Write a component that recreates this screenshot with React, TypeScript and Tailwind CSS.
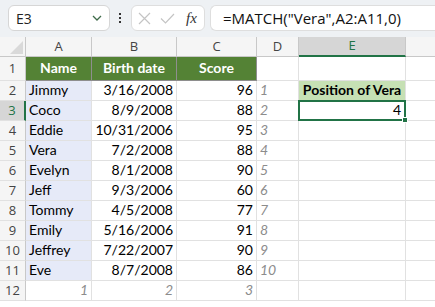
import React from 'react';

const COLS = ['A', 'B', 'C', 'D', 'E', ''];

const DATA: [string, string, number][] = [
  ['Jimmy', '3/16/2008', 96],
  ['Coco', '8/9/2008', 88],
  ['Eddie', '10/31/2006', 95],
  ['Vera', '7/2/2008', 88],
  ['Evelyn', '8/1/2008', 90],
  ['Jeff', '9/3/2006', 60],
  ['Tommy', '4/5/2008', 77],
  ['Emily', '5/16/2006', 91],
  ['Jeffrey', '7/22/2007', 90],
  ['Eve', '8/7/2008', 86],
];

const cellFont = { fontFamily: 'Lato, "Liberation Sans", sans-serif' };
const uiFont = { fontFamily: '"Open Sans", "Noto Sans", sans-serif' };

/** Plain gridline cell. */
function Cell({ className = '', children }: { className?: string; children?: React.ReactNode }) {
  return (
    <div className={`flex items-end overflow-visible whitespace-nowrap border-r border-b border-[#e1e1e1] px-[3px] pb-[1px] text-[14px] leading-[18px] text-black ${className}`}>
      {children}
    </div>
  );
}

function RowHead({ n, selected }: { n: number; selected?: boolean }) {
  return (
    <div
      className={`flex items-center justify-center border-b border-[#e1e1e1] text-[13px] ${
        selected ? 'border-r-2 border-r-[#217346] bg-[#d6d6d6] text-[#217346]' : 'border-r border-r-[#c8c8c8] bg-[#f5f5f5] text-[#444]'
      }`}
      style={uiFont}
    >
      {n}
    </div>
  );
}

function Tally({ children, right }: { children: React.ReactNode; right?: boolean }) {
  return <span className={`w-full italic text-[#8c8c8c] ${right ? 'text-right' : ''}`}>{children}</span>;
}

export default function App() {
  return (
    <div className="h-[307px] w-[435px] overflow-hidden bg-white" style={cellFont}>
      {/* formula bar */}
      <div className="flex h-[37px] items-start bg-[#eef1f4] pt-[5px]" style={uiFont}>
        <div className="ml-[8px] flex h-[26px] w-[102px] items-center justify-between rounded-[6px] border border-[#d6d6d6] bg-white pl-[7px] pr-[7px] text-[14px] text-[#222]">
          <span>E3</span>
          <svg width="10" height="6" viewBox="0 0 10 6" fill="none" stroke="#3f6b4a" strokeWidth="1.3">
            <path d="M1 1l4 4 4-4" />
          </svg>
        </div>
        <div className="flex h-[26px] w-[20px] flex-col items-center justify-center gap-[2px]">
          <span className="h-[2px] w-[2px] bg-[#333]" />
          <span className="h-[2px] w-[2px] bg-[#333]" />
          <span className="h-[2px] w-[2px] bg-[#333]" />
        </div>
        <div className="ml-[1px] flex h-[26px] w-[74px] items-center rounded-[6px] border border-[#dedede] bg-white pl-[6px]">
          <svg width="13" height="13" viewBox="0 0 13 13" stroke="#c4c4c4" strokeWidth="1.2">
            <path d="M1 1l11 11M12 1L1 12" />
          </svg>
          <svg className="ml-[9px]" width="15" height="11" viewBox="0 0 15 11" fill="none" stroke="#c4c4c4" strokeWidth="1.2">
            <path d="M1 5.5l4.5 4.5L14 1" />
          </svg>
          <span className="ml-[11px] text-[15px] italic text-[#333]" style={{ fontFamily: '"Liberation Serif", serif' }}>
            fx
          </span>
        </div>
        <div className="ml-[5px] flex h-[26px] flex-1 items-center rounded-l-[6px] border border-r-0 border-[#dedede] bg-white pl-[12px] text-[15px] text-[#111]">
          =MATCH("Vera",A2:A11,0)
        </div>
      </div>

      {/* sheet */}
      <div
        className="grid"
        style={{
          gridTemplateColumns: '26px 66px 85px 80px 42px 107px 1fr',
          gridTemplateRows: '20px 24px repeat(11, 20px) 20px',
        }}
      >
        {/* column headers */}
        <div className="relative border-r border-b border-[#c8c8c8] bg-[#f5f5f5]">
          <svg className="absolute right-[2px] bottom-[2px]" width="13" height="13" viewBox="0 0 13 13">
            <path d="M13 0V13H0Z" fill="#d9d9d9" />
          </svg>
        </div>
        {COLS.map((c, i) => (
          <div
            key={i}
            className={`flex items-center justify-center text-[13px] ${
              c === 'E'
                ? 'border-r border-b-2 border-r-[#c8c8c8] border-b-[#217346] bg-[#d6d6d6] text-[#217346]'
                : 'border-r border-b border-[#c8c8c8] bg-[#f5f5f5] text-[#444]'
            } ${i === 5 ? 'border-r-0' : ''}`}
            style={uiFont}
          >
            {c}
          </div>
        ))}

        {/* row 1 */}
        <RowHead n={1} />
        <div className="flex items-end justify-center border-r border-b border-[#8e8e8e] bg-[#548235] pb-[2px] text-[14px] font-bold text-white">Name</div>
        <div className="flex items-end justify-center border-r border-b border-[#8e8e8e] bg-[#548235] pb-[2px] text-[14px] font-bold text-white">Birth date</div>
        <div className="flex items-end justify-center border-r border-b border-[#8e8e8e] bg-[#548235] pb-[2px] text-[14px] font-bold text-white">Score</div>
        <Cell />
        <Cell />
        <Cell className="border-r-0" />

        {DATA.map(([name, date, score], i) => {
          const r = i + 2;
          return (
            <React.Fragment key={r}>
              <RowHead n={r} selected={r === 3} />
              <Cell className="border-[#8e8e8e] bg-[#e6eaf8]">{name}</Cell>
              <Cell className="justify-end border-[#8e8e8e]">{date}</Cell>
              <Cell className="justify-end border-[#8e8e8e]">{score}</Cell>
              <Cell>
                <Tally>{i + 1}</Tally>
              </Cell>
              {r === 2 && (
                <Cell className="-ml-[1px] -mt-[1px] justify-center border-t border-l border-[#8e8e8e] bg-[#c6e0b4] font-bold">Position of Vera</Cell>
              )}
              {r === 3 && (
                <div className="relative -ml-[1px] -mt-[1px] flex items-end justify-end border-2 border-[#217346] pr-[3px] text-[14px] leading-[18px] text-black">
                  4
                  <span className="absolute -right-[4px] -bottom-[4px] h-[6px] w-[6px] border border-white bg-[#217346]" />
                </div>
              )}
              {r > 3 && <Cell />}
              <Cell className="border-r-0" />
            </React.Fragment>
          );
        })}

        {/* row 12 */}
        <RowHead n={12} />
        <Cell>
          <Tally right>1</Tally>
        </Cell>
        <Cell>
          <Tally right>2</Tally>
        </Cell>
        <Cell>
          <Tally right>3</Tally>
        </Cell>
        <Cell />
        <Cell />
        <Cell className="border-r-0" />
      </div>
    </div>
  );
}
